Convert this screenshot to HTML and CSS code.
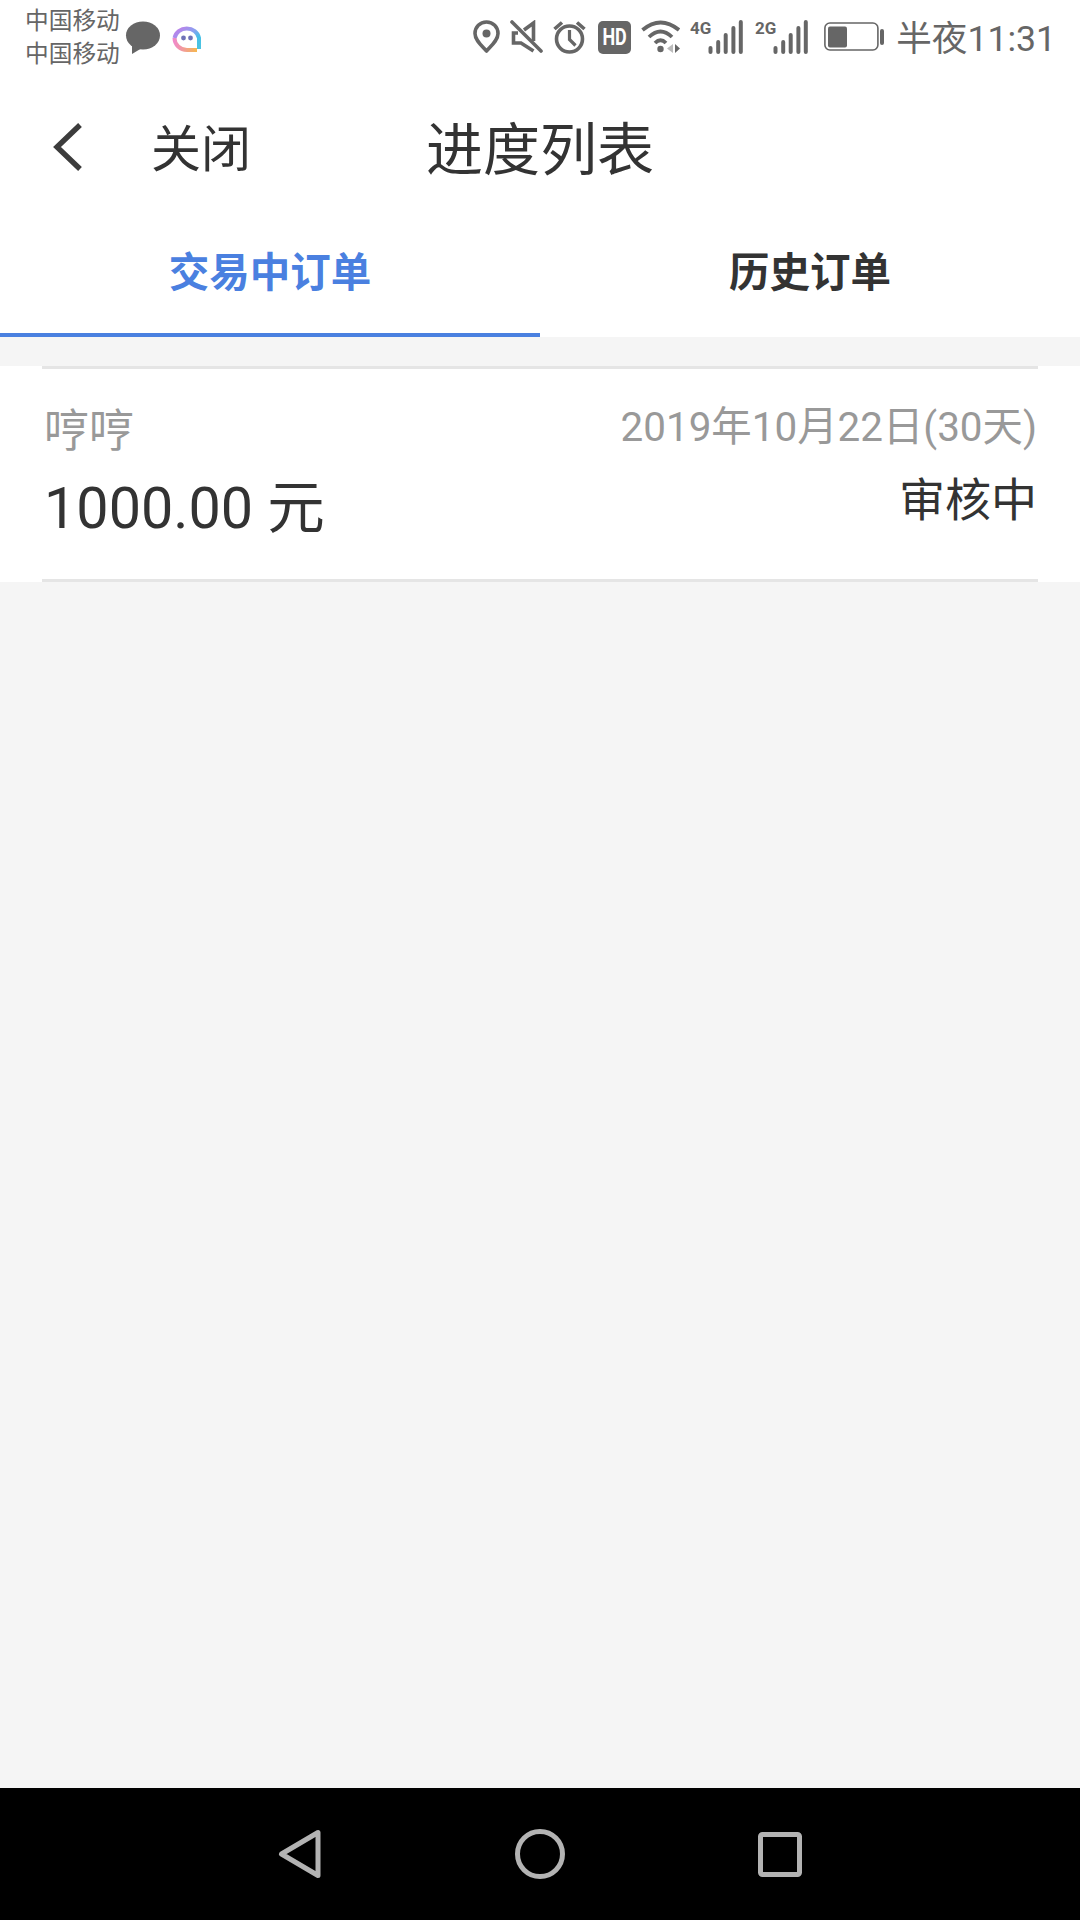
FILE: index.html
```html
<!DOCTYPE html>
<html lang="zh-CN">
<head>
    <meta charset="UTF-8">
    <meta name="viewport" content="width=device-width, initial-scale=1.0">
    <title>进度列表</title>
    <link rel="stylesheet" href="styles.css">
</head>
<body>
    <div class="page">
        <div class="status-bar">
            <div class="status-left">
                <div class="carriers">
                    <div>中国移动</div>
                    <div>中国移动</div>
                </div>
                <svg class="bubble" width="36" height="34" viewBox="0 0 36 34">
                    <ellipse cx="18" cy="14.5" rx="17" ry="14" fill="#666"/>
                    <path d="M7 23 L7 33 L17 27 Z" fill="#666"/>
                </svg>
                <svg class="mascot" width="30" height="28" viewBox="0 0 30 28">
                    <defs>
                        <linearGradient id="ring" x1="0" y1="0" x2="1" y2="1">
                            <stop offset="0" stop-color="#c77be8"/>
                            <stop offset="0.45" stop-color="#8aa0f0"/>
                            <stop offset="0.7" stop-color="#45c0e8"/>
                            <stop offset="1" stop-color="#4cc4e0"/>
                        </linearGradient>
                        <linearGradient id="ring-low" x1="0" y1="0" x2="1" y2="0">
                            <stop offset="0" stop-color="#f08ac8"/>
                            <stop offset="1" stop-color="#f5b84e"/>
                        </linearGradient>
                    </defs>
                    <path d="M27 25 V14 A12.5 12 0 0 0 2.5 14" fill="none" stroke="url(#ring)" stroke-width="4"/>
                    <path d="M2.5 14 A12.5 12 0 0 0 15 26 H25" fill="none" stroke="url(#ring-low)" stroke-width="4"/>
                    <circle cx="11.5" cy="14" r="2.4" fill="#6f72b8"/>
                    <circle cx="18.5" cy="14" r="2.4" fill="#6f72b8"/>
                </svg>
            </div>
            <div class="status-right">
                <svg width="27" height="34" viewBox="0 0 27 34">
                    <path d="M13.5 31 C9 26 2 20.5 2 13.5 C2 7 7 2 13.5 2 C20 2 25 7 25 13.5 C25 20.5 18 26 13.5 31 Z" fill="none" stroke="#666" stroke-width="3.6" stroke-linejoin="round"/>
                    <circle cx="13.5" cy="13.5" r="4" fill="#666"/>
                </svg>
                <svg width="33" height="34" viewBox="0 0 33 34">
                    <path d="M2 2 L31 31" stroke="#666" stroke-width="3.6" stroke-linecap="round"/>
                    <path d="M14 10 L23.5 3 V21" fill="none" stroke="#666" stroke-width="3.6"/>
                    <path d="M8 13 H3.5 V23 H11 L23.5 31" fill="none" stroke="#666" stroke-width="3.6"/>
                </svg>
                <svg width="35" height="34" viewBox="0 0 35 34">
                    <circle cx="16.5" cy="19" r="13" fill="none" stroke="#666" stroke-width="3.6"/>
                    <path d="M16.5 10 V19.5 L22.5 25.5" fill="none" stroke="#666" stroke-width="3.2"/>
                    <path d="M1.5 9 L9 2.5 M24 2.5 L31.5 9" stroke="#666" stroke-width="3.6"/>
                </svg>
                <div class="hd-badge"><span>HD</span></div>
                <svg width="39" height="34" viewBox="0 0 39 34">
                    <path d="M1.5 10 Q19.5 -5 38 10" fill="none" stroke="#666" stroke-width="3.8"/>
                    <path d="M8 17 Q19.5 6 31 17" fill="none" stroke="#666" stroke-width="3.8"/>
                    <path d="M14 23 Q19.5 17.5 25 23" fill="none" stroke="#666" stroke-width="3.8"/>
                    <circle cx="19.5" cy="29" r="3.2" fill="#666"/>
                    <path d="M32 24 V33 L26 28.5 Z" fill="#bbb"/>
                    <path d="M34 24 V33 L39 28.5 Z" fill="#666"/>
                </svg>
                <svg class="signal" width="55" height="38" viewBox="0 -4 55 38">
                    <text class="net-label" x="0" y="14">4G</text>
                    <rect x="18.5" y="26" width="4" height="8" rx="2" fill="#666"/>
                    <rect x="26.2" y="20" width="4" height="14" rx="2" fill="#666"/>
                    <rect x="33.7" y="13" width="4" height="21" rx="2" fill="#666"/>
                    <rect x="41.4" y="6" width="4" height="28" rx="2" fill="#666"/>
                    <rect x="48.8" y="0" width="4" height="34" rx="2" fill="#666"/>
                </svg>
                <svg class="signal" width="59" height="38" viewBox="0 -4 59 38">
                    <text class="net-label" x="0" y="14">2G</text>
                    <rect x="18.5" y="26" width="4" height="8" rx="2" fill="#666"/>
                    <rect x="26.2" y="20" width="4" height="14" rx="2" fill="#666"/>
                    <rect x="33.7" y="13" width="4" height="21" rx="2" fill="#666"/>
                    <rect x="41.4" y="6" width="4" height="28" rx="2" fill="#666"/>
                    <rect x="48.8" y="0" width="4" height="34" rx="2" fill="#666"/>
                </svg>
                <svg width="60" height="30" viewBox="0 0 60 30">
                    <rect x="0.9" y="1" width="53" height="27" rx="5" fill="none" stroke="#666" stroke-width="1.6"/>
                    <rect x="4" y="4.5" width="19" height="21" rx="2" fill="#666"/>
                    <rect x="56" y="7" width="4" height="16" rx="2" fill="#666"/>
                </svg>
                <div class="clock">半夜11:31</div>
            </div>
        </div>

        <div class="title-bar">
            <div class="title-left">
                <svg class="back-icon" width="30" height="50" viewBox="0 0 30 50">
                    <path d="M27 3 L4 25 L27 47" fill="none" stroke="#3c3c3c" stroke-width="5.4"/>
                </svg>
                <span class="close-text">关闭</span>
            </div>
            <div class="title-text">进度列表</div>
            <div></div>
        </div>

        <div class="tabs">
            <div class="tab active">交易中订单</div>
            <div class="tab">历史订单</div>
        </div>

        <div class="order-list">
            <div class="order-card">
                <div class="order-row">
                    <div class="order-col">
                        <div class="order-name">哼哼</div>
                        <div class="order-amount">1000.00 元</div>
                    </div>
                    <div class="order-col align-right">
                        <div class="order-date">2019年10月22日(30天)</div>
                        <div class="order-state">审核中</div>
                    </div>
                </div>
            </div>
        </div>

        <div class="nav-bar">
            <svg width="50" height="50" viewBox="0 0 50 50">
                <path d="M43 3.5 V46.5 L6.5 25 Z" fill="none" stroke="#b3b3b3" stroke-width="5" stroke-linejoin="round"/>
            </svg>
            <svg width="50" height="50" viewBox="0 0 50 50">
                <circle cx="25" cy="25" r="22.5" fill="none" stroke="#b3b3b3" stroke-width="5"/>
            </svg>
            <svg width="50" height="50" viewBox="0 0 50 50">
                <rect x="5.5" y="5.5" width="39" height="40" rx="2" fill="none" stroke="#b3b3b3" stroke-width="5"/>
            </svg>
        </div>
    </div>
</body>
</html>
```

FILE: styles.css
```css
* {
    margin: 0;
    padding: 0;
    box-sizing: border-box;
}
body {
    font-family: Roboto, "Noto Sans CJK SC", sans-serif;
    background-color: #f5f5f5;
    color: #333;
}
.page {
    display: flex;
    flex-direction: column;
    width: 1080px;
    height: 1920px;
    overflow: hidden;
}
.status-bar {
    display: flex;
    justify-content: space-between;
    align-items: center;
    height: 74px;
    padding: 0 24px 0 25px;
    background: #fff;
    color: #666;
}
.status-left {
    display: flex;
    align-items: center;
    padding-top: 2px;
}
.carriers {
    font-size: 23.7px;
    line-height: 33px;
}
.bubble {
    margin-left: 5px;
}
.mascot {
    margin-left: 11px;
}
.status-right {
    display: flex;
    align-items: center;
    gap: 10px;
}
.status-right svg {
    display: block;
}
.status-right .signal {
    margin-top: -4px;
}
.hd-badge {
    display: flex;
    justify-content: center;
    align-items: center;
    width: 33px;
    height: 33px;
    border-radius: 5px;
    background: #666;
    color: #fff;
    font-size: 23px;
    font-weight: 700;
}
.hd-badge span {
    transform: scaleX(0.78);
}
.net-label {
    font-family: "Liberation Sans Narrow", Roboto, sans-serif;
    font-size: 17px;
    font-weight: 700;
    fill: #666;
}
.clock {
    margin-left: 2px;
    padding-bottom: 3px;
    font-size: 35.6px;
    white-space: nowrap;
}
.title-bar {
    display: grid;
    grid-template-columns: 1fr auto 1fr;
    align-items: center;
    height: 142px;
    background: #fff;
}
.title-left {
    display: flex;
    align-items: center;
    padding-left: 53px;
}
.back-icon {
    margin-top: 3px;
}
.close-text {
    margin-left: 68px;
    font-size: 50px;
}
.title-text {
    font-size: 57px;
}
.tabs {
    display: flex;
    height: 121px;
    background: #fff;
}
.tab {
    display: flex;
    flex: 1;
    justify-content: center;
    align-items: center;
    padding-bottom: 14px;
    font-size: 40.5px;
    font-weight: 700;
}
.tab.active {
    padding-bottom: 10px;
    color: #4a80e0;
    border-bottom: 4px solid #4a80e0;
}
.order-list {
    flex: 1;
    padding-top: 29px;
}
.order-card {
    padding: 0 42px;
    background: #fff;
}
.order-row {
    display: flex;
    justify-content: space-between;
    height: 216px;
    padding: 33px 1px 0 2px;
    border-top: 3px solid #e5e5e5;
    border-bottom: 3px solid #e5e5e5;
}
.order-col {
    display: flex;
    flex-direction: column;
}
.align-right {
    align-items: flex-end;
}
.order-name {
    font-size: 45px;
    line-height: 60px;
    color: #999;
}
.order-amount {
    margin-top: 8px;
    font-size: 57.5px;
    line-height: 78px;
}
.order-date {
    font-size: 40.4px;
    line-height: 52px;
    color: #999;
}
.order-state {
    margin-top: 16px;
    font-size: 46px;
    line-height: 60px;
}
.nav-bar {
    display: flex;
    justify-content: center;
    align-items: center;
    gap: 190px;
    height: 132px;
    background: #000;
}
```
